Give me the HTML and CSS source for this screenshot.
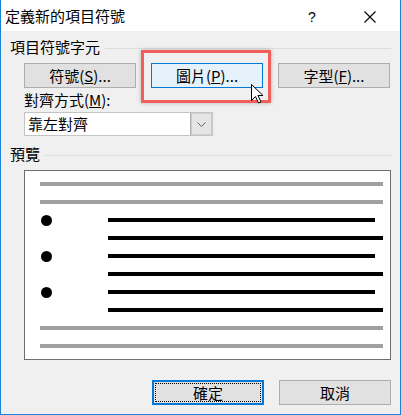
FILE: index.html
```html
<!DOCTYPE html>
<html lang="zh-Hant">
<head>
    <meta charset="UTF-8">
    <title>定義新的項目符號</title>
    <link rel="stylesheet" href="styles.css">
</head>
<body>
    <div class="window">
        <div class="titlebar">
            <span class="title">定義新的項目符號</span>
            <span class="help">?</span>
            <span class="close">
                <svg width="12" height="12" viewBox="0 0 12 12"><path d="M0.5 0.5 L11.5 11.5 M11.5 0.5 L0.5 11.5" stroke="#000" stroke-width="1.1" fill="none"/></svg>
            </span>
        </div>

        <div class="content">
            <div class="group-head">
                <span>項目符號字元</span>
                <div class="rule"></div>
            </div>

            <div class="btn-row">
                <button class="btn">符號(<u>S</u>)...</button>
                <button class="btn hot">圖片(<u>P</u>)...</button>
                <button class="btn">字型(<u>F</u>)...</button>
            </div>

            <div class="field-label">對齊方式(<u>M</u>):</div>
            <div class="combo">
                <span class="combo-text">靠左對齊</span>
                <span class="combo-arrow">
                    <svg width="9" height="5" viewBox="0 0 9 5"><path d="M0.5 0.5 L4.5 4.5 L8.5 0.5" stroke="#606060" fill="none"/></svg>
                </span>
            </div>

            <div class="group-head preview-head">
                <span>預覽</span>
                <div class="rule"></div>
            </div>

            <div class="preview">
                <div class="pv-row"><div class="bar gray"></div></div>
                <div class="pv-row"><div class="bar gray"></div></div>
                <div class="pv-row"><span class="dot"></span><div class="bar short"></div></div>
                <div class="pv-row"><div class="bar long"></div></div>
                <div class="pv-row"><span class="dot"></span><div class="bar short"></div></div>
                <div class="pv-row"><div class="bar long"></div></div>
                <div class="pv-row"><span class="dot"></span><div class="bar short"></div></div>
                <div class="pv-row"><div class="bar long"></div></div>
                <div class="pv-row"><div class="bar gray"></div></div>
                <div class="pv-row"><div class="bar gray"></div></div>
            </div>

            <div class="actions">
                <button class="btn default"><span class="focus">確定</span></button>
                <button class="btn">取消</button>
            </div>
        </div>

        <div class="highlight"></div>
        <svg class="cursor" width="13" height="20" viewBox="0 0 13 20">
            <path d="M0.5 0.5 V16.5 L4.5 12.5 L7.5 19 L10 18 L7 11.5 H12 Z" fill="#fff" stroke="#000" stroke-width="1" stroke-linejoin="miter"/>
        </svg>
    </div>
</body>
</html>
```

FILE: styles.css
```css
body {
    margin: 0;
    background: #f0f0f0;
    font-family: "Noto Sans CJK TC", "Liberation Sans", sans-serif;
    font-size: 15px;
    color: #000;
}

.window {
    position: relative;
    width: 401px;
    height: 415px;
    box-sizing: border-box;
    border: 1px solid #1883d7;
    border-top: none;
    background: #f0f0f0;
    overflow: hidden;
}

.titlebar {
    height: 31px;
    background: #fff;
    display: flex;
    align-items: center;
    padding-left: 4px;
}

.title {
    flex: 1;
    line-height: 18px;
    margin-top: 1px;
}

.help {
    font-family: "Liberation Sans", sans-serif;
    font-size: 14px;
    width: 12px;
    margin-right: 44px;
    margin-top: 2px;
}

.close {
    display: flex;
    margin-right: 24px;
    margin-top: 2px;
}

.content {
    padding: 0 9px;
}

.group-head {
    display: flex;
    align-items: center;
    height: 18px;
    line-height: 18px;
    margin-top: 7px;
}

.group-head .rule {
    flex: 1;
    height: 1px;
    background: #dcdcdc;
    margin-left: 5px;
    margin-top: 2px;
}

.btn-row {
    display: flex;
    gap: 15px;
    margin: 7px 0 0 14px;
}

.btn {
    width: 112px;
    height: 25px;
    box-sizing: border-box;
    background: #e1e1e1;
    border: 1px solid #adadad;
    font-family: inherit;
    font-size: 15px;
    line-height: 18px;
    color: #000;
    padding: 0;
    margin: 0;
}

.btn.hot {
    background: #e5f1fb;
    border-color: #0078d7;
}

.field-label {
    margin: 3px 0 0 14px;
    line-height: 18px;
}

.combo {
    display: flex;
    width: 189px;
    height: 24px;
    box-sizing: border-box;
    margin: 3px 0 0 14px;
    border: 1px solid #c4c4c4;
    background: #fff;
}

.combo-text {
    flex: 1;
    padding-left: 3px;
    line-height: 22px;
}

.combo-arrow {
    width: 21px;
    display: flex;
    align-items: center;
    justify-content: center;
    background: #e5e5e5;
    border-left: 1px solid #adadad;
    box-shadow: inset 0 0 0 1px #cdcdcd;
}

.preview-head {
    margin-top: 9px;
}

.preview {
    width: 367px;
    height: 190px;
    box-sizing: border-box;
    margin: 7px 0 0 14px;
    border: 1px solid #6e6e6e;
    background: #fff;
    padding: 11px 7px 0 15px;
}

.pv-row {
    display: flex;
    align-items: center;
    height: 4px;
    margin-bottom: 14px;
}

.bar {
    height: 4px;
}

.bar.gray {
    flex: 1;
    background: #a0a0a0;
}

.bar.short {
    background: #000;
    width: 267px;
    margin-left: 56px;
}

.bar.long {
    background: #000;
    width: 275px;
    margin-left: 68px;
}

.dot {
    width: 11px;
    height: 11px;
    border-radius: 50%;
    background: #000;
    margin-left: 1px;
    flex-shrink: 0;
}

.actions {
    display: flex;
    justify-content: flex-end;
    gap: 15px;
    margin-top: 20px;
}

.btn.default {
    border: 2px solid #0078d7;
    padding: 1px;
}

.focus {
    display: block;
    height: 100%;
    box-sizing: border-box;
    border: 1px dotted #000;
    line-height: 17px;
}

.highlight {
    position: absolute;
    left: 140px;
    top: 50px;
    width: 130px;
    height: 53px;
    box-sizing: border-box;
    border: 3px solid #f05f5c;
    box-shadow: 0 0 4px rgba(0, 0, 0, 0.25);
}

.cursor {
    position: absolute;
    left: 250px;
    top: 84px;
}
```
